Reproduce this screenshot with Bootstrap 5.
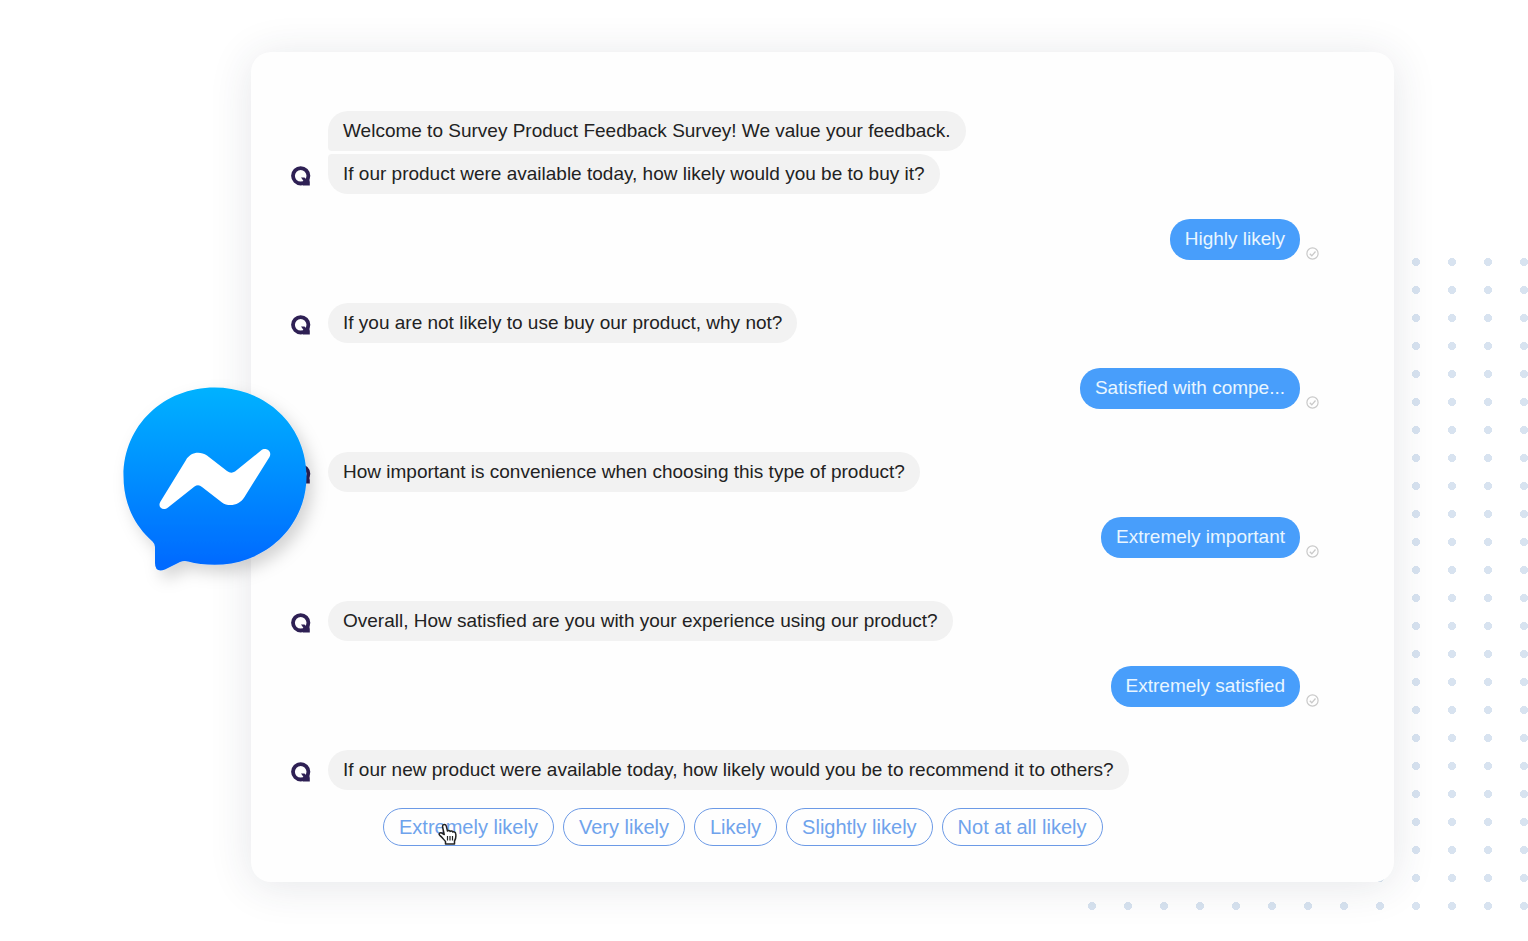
<!DOCTYPE html>
<html lang="en">
<head>
<meta charset="utf-8">
<meta name="viewport" content="width=device-width, initial-scale=1">
<title>Survey chat</title>
<link href="https://cdn.jsdelivr.net/npm/bootstrap@5.3.0/dist/css/bootstrap.min.css" rel="stylesheet">
<style>
  body { font-family: "Liberation Sans", Arial, sans-serif; font-size: 19px; line-height: 24px; color: #222; background: #fff; }
  .stage { padding: 52px 134px 59px 251px; overflow: hidden; }
  /* dotted decoration behind the panel */
  .dots { right: 0; top: 248px; width: 454px; height: 672px;
    background: radial-gradient(circle, #d8e3f0 4px, transparent 4px) 0 0 / 36px 28px; }
  .chat-panel { padding: 59px 75px 36px 40px; border-radius: 20px; background: #fefefe;
    box-shadow: 0 4px 44px rgba(40, 50, 70, .12); }
  .thread { gap: 43px; }
  .avatar { width: 20px; height: 20px; margin: 0 17px 8px 0; }
  .bubble { padding: 8px 15px; border-radius: 20px; background: #f2f2f2; }
  .bubble-first { border-bottom-left-radius: 4px; }
  .bubble-last { border-top-left-radius: 4px; }
  .stacked { gap: 3px; }
  .reply { margin-top: 25px; gap: 6px; }
  .reply-bubble { padding: 8px 15px 9px; border-radius: 20px; background: #489efb; color: #e9f6ff; }
  .choices { margin: 18px 0 0 92px; gap: 9px; }
  .choice { font-size: 20px; line-height: 24px; padding: 6px 15px; border: 1px solid #6c9ae6; border-radius: 20px; color: #6fa3ec; background: #fefefe; }
  .messenger { left: -158px; top: 305px; }
  .pointer { left: 55px; top: 15px; }
</style>
</head>
<body>
<svg class="d-none" xmlns="http://www.w3.org/2000/svg">
  <symbol id="q-logo" viewBox="0 0 20 20">
    <circle cx="9.700" cy="9.800" r="7.700" fill="none" stroke="#2e2054" stroke-width="3.800"/>
    <path d="M10 11.500h3.500l1.500 1.500 3-1 .8 4v3.500H12l-1-2 1.500-2.500z" fill="#2e2054"/>
  </symbol>
  <symbol id="sent" viewBox="0 0 13 13">
    <circle cx="6.500" cy="6.500" r="5.600" fill="none" stroke="#c9c9c9" stroke-width="1.200"/>
    <path d="M3.800 6.800l2 2 3.700-4.300" fill="none" stroke="#c9c9c9" stroke-width="1.300"/>
  </symbol>
</svg>
<main class="stage position-relative min-vh-100">
  <div class="dots position-absolute"></div>
  <section class="chat-panel position-relative">
    <div class="thread d-flex flex-column">
      <article>
        <div class="d-flex align-items-end">
          <svg class="avatar flex-shrink-0" role="img" aria-label="Q"><use href="#q-logo"/></svg>
          <div class="stacked d-flex flex-column align-items-start">
            <div class="bubble bubble-first">Welcome to Survey Product Feedback Survey! We value your feedback.</div>
            <div class="bubble bubble-last">If our product were available today, how likely would you be to buy it?</div>
          </div>
        </div>
        <div class="reply d-flex justify-content-end align-items-end">
          <div class="reply-bubble">Highly likely</div>
          <svg width="13" height="13" aria-hidden="true"><use href="#sent"/></svg>
        </div>
      </article>
      <article>
        <div class="d-flex align-items-end">
          <svg class="avatar flex-shrink-0" role="img" aria-label="Q"><use href="#q-logo"/></svg>
          <div class="bubble">If you are not likely to use buy our product, why not?</div>
        </div>
        <div class="reply d-flex justify-content-end align-items-end">
          <div class="reply-bubble">Satisfied with compe...</div>
          <svg width="13" height="13" aria-hidden="true"><use href="#sent"/></svg>
        </div>
      </article>
      <article>
        <div class="d-flex align-items-end">
          <svg class="avatar flex-shrink-0" role="img" aria-label="Q"><use href="#q-logo"/></svg>
          <div class="bubble">How important is convenience when choosing this type of product?</div>
        </div>
        <div class="reply d-flex justify-content-end align-items-end">
          <div class="reply-bubble">Extremely important</div>
          <svg width="13" height="13" aria-hidden="true"><use href="#sent"/></svg>
        </div>
      </article>
      <article>
        <div class="d-flex align-items-end">
          <svg class="avatar flex-shrink-0" role="img" aria-label="Q"><use href="#q-logo"/></svg>
          <div class="bubble">Overall, How satisfied are you with your experience using our product?</div>
        </div>
        <div class="reply d-flex justify-content-end align-items-end">
          <div class="reply-bubble">Extremely satisfied</div>
          <svg width="13" height="13" aria-hidden="true"><use href="#sent"/></svg>
        </div>
      </article>
      <article>
        <div class="d-flex align-items-end">
          <svg class="avatar flex-shrink-0" role="img" aria-label="Q"><use href="#q-logo"/></svg>
          <div class="bubble">If our new product were available today, how likely would you be to recommend it to others?</div>
        </div>
        <div class="choices d-flex flex-wrap position-relative">
          <button type="button" class="btn choice">Extremely likely</button>
          <button type="button" class="btn choice">Very likely</button>
          <button type="button" class="btn choice">Likely</button>
          <button type="button" class="btn choice">Slightly likely</button>
          <button type="button" class="btn choice">Not at all likely</button>
          <svg class="pointer position-absolute" width="20" height="24" viewBox="0 0 20 24" aria-hidden="true">
            <path d="M4.500 3.500c0-2.400 3.300-2.500 3.800-.4l1.200 5c.7-1 2.300-.8 2.700.3.900-.8 2.300-.4 2.600.6 1.400-.5 2.700.3 2.900 1.700.5 3 .2 5-1.200 7.300v3H7.500v-2.500c-1.500-1.500-3.500-4.500-5.700-6.200-1.500-1.400.2-3.200 2-2.300l2.400 1.500z" fill="#fff" stroke="#222" stroke-width="1.500" stroke-linejoin="round"/>
            <path d="M9.500 13v4.500M12 13v4.500M14.500 13v4.500" stroke="#222" stroke-width="1.200"/>
          </svg>
        </div>
      </article>
    </div>
    <svg class="messenger position-absolute" width="250" height="250" viewBox="0 0 250 250" role="img" aria-label="Messenger">
      <defs>
        <linearGradient id="blue" x1="0" y1="0" x2="0" y2="1"><stop offset="0" stop-color="#00b2ff"/><stop offset=".97" stop-color="#006aff"/></linearGradient>
        <filter id="shade" x="-30%" y="-30%" width="160%" height="160%"><feDropShadow dx="6" dy="8" stdDeviation="8" flood-color="#000" flood-opacity=".17"/></filter>
      </defs>
      <path d="M121.500 30.500C172 30.500 213.500 68 213.500 119C213.500 170 172 207.800 121.500 207.800C112 207.800 103 206.800 95 204.500Q91 203.500 87 205L72 212.500Q62 216 62 206V190Q62 187 59.500 184.500C41 168 30.500 146 30.500 119C30.500 68 71 30.500 121.500 30.500Z" fill="url(#blue)" filter="url(#shade)"/>
      <path d="M67.500 144.500L93 103C97 95.500 106.500 93.500 114 98.500L134 114Q138 117 142 114.500L168 93.500C173 89.500 179.500 94.500 176.500 100L151.500 140C147 148 136 150.500 129 145.500L109 130Q105.500 127 101.500 129.500L75 150.500C70 154.500 64 150 67.500 144.500Z" fill="#fff"/>
    </svg>
  </section>
</main>
<script src="https://cdn.jsdelivr.net/npm/bootstrap@5.3.0/dist/js/bootstrap.bundle.min.js"></script>
</body>
</html>
